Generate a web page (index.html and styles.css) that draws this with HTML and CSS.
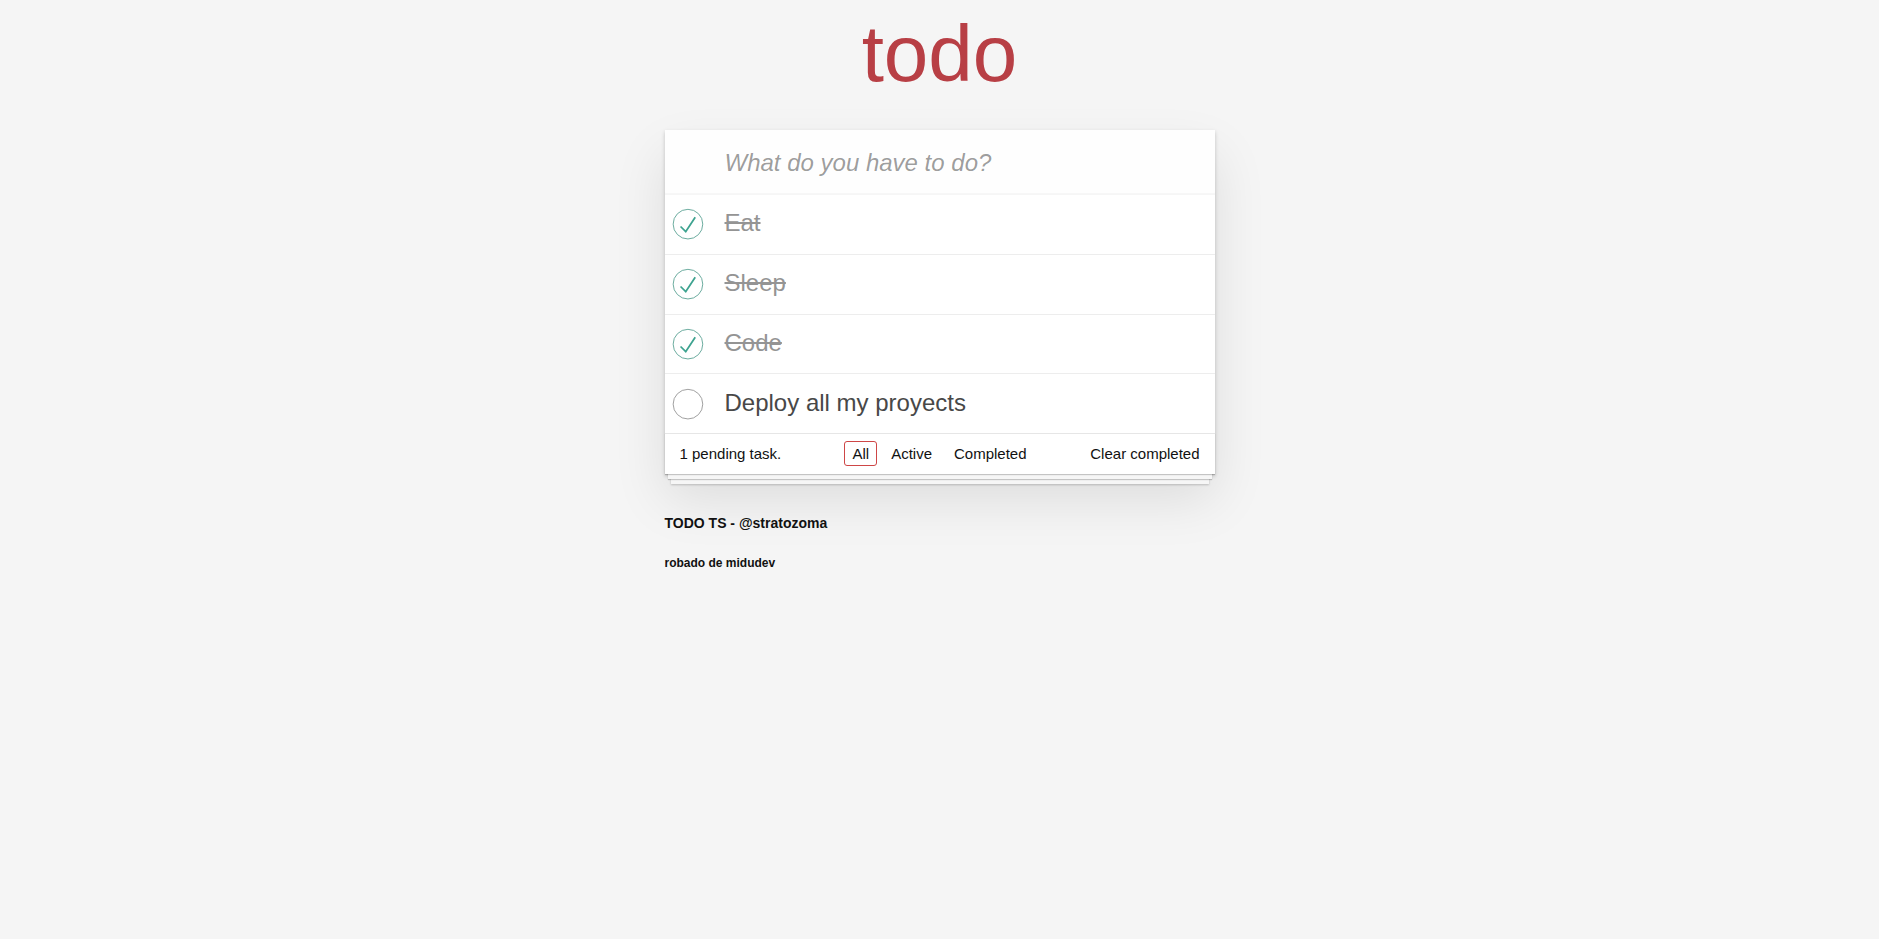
FILE: index.html
```html
<!DOCTYPE html>
<html lang="en">
<head>
<meta charset="utf-8">
<meta name="viewport" content="width=device-width, initial-scale=1">
<title>todo</title>
<link rel="stylesheet" href="styles.css">
</head>
<body>
<svg class="sprite" aria-hidden="true">
  <symbol id="done" viewBox="-10 -18 100 135" overflow="visible">
    <circle cx="50" cy="50" r="50" fill="none" stroke="#59a193" stroke-width="3"/>
    <path fill="#3ea390" d="M72 25L42 71 27 56l-4 4 20 20 34-52z"/>
  </symbol>
  <symbol id="open" viewBox="-10 -18 100 135" overflow="visible">
    <circle cx="50" cy="50" r="50" fill="none" stroke="#949494" stroke-width="3"/>
  </symbol>
</svg>
<div class="page">
  <header>
    <h1 class="title">todo</h1>
  </header>
  <main class="card">
    <form class="new-form">
      <input class="new-todo" type="text" placeholder="What do you have to do?" aria-label="New task">
    </form>
    <ul class="list">
      <li class="item item-done">
        <span class="mark"><input class="toggle" type="checkbox" id="t1" checked><svg class="icon" aria-hidden="true"><use href="#done"/></svg></span>
        <label class="label" for="t1">Eat</label>
      </li>
      <li class="item item-done">
        <span class="mark"><input class="toggle" type="checkbox" id="t2" checked><svg class="icon" aria-hidden="true"><use href="#done"/></svg></span>
        <label class="label" for="t2">Sleep</label>
      </li>
      <li class="item item-done">
        <span class="mark"><input class="toggle" type="checkbox" id="t3" checked><svg class="icon" aria-hidden="true"><use href="#done"/></svg></span>
        <label class="label" for="t3">Code</label>
      </li>
      <li class="item">
        <span class="mark"><input class="toggle" type="checkbox" id="t4"><svg class="icon" aria-hidden="true"><use href="#open"/></svg></span>
        <label class="label" for="t4">Deploy all my proyects</label>
      </li>
    </ul>
    <div class="bar">
      <span>1 pending task.</span>
      <nav class="filters">
        <a class="filter filter-on" href="#all">All</a>
        <a class="filter" href="#active">Active</a>
        <a class="filter" href="#completed">Completed</a>
      </nav>
      <button class="clear" type="button">Clear completed</button>
    </div>
  </main>
  <footer class="credits">
    <h3 class="credit-main">TODO TS - @stratozoma</h3>
    <h5 class="credit-sub">robado de midudev</h5>
  </footer>
</div>
</body>
</html>
```
FILE: styles.css
```css
* {
  box-sizing: border-box;
}

body {
  margin: 0;
  background: #f5f5f5;
  color: #111;
  font-family: "Liberation Sans", Arial, sans-serif;
  font-size: 15px;
  line-height: 17px;
}

.sprite {
  display: none;
}

.page {
  max-width: 550px;
  margin: 0 auto;
}

.title {
  margin: 0 0 26px;
  padding-top: 4px;
  color: #b83f45;
  font-size: 80px;
  font-weight: 400;
  line-height: 100px;
  text-align: center;
}

.card {
  background: #fff;
  box-shadow: 0 2px 4px rgba(0, 0, 0, 0.2), 0 25px 50px rgba(0, 0, 0, 0.1);
}

.new-form {
  display: flex;
}

.new-todo {
  width: 100%;
  height: 65px;
  padding: 16px 16px 16px 60px;
  border: 0;
  outline: 0;
  background: rgba(0, 0, 0, 0.003);
  box-shadow: inset 0 -2px 1px rgba(0, 0, 0, 0.03);
  font: inherit;
  font-size: 24px;
}

.new-todo::placeholder {
  color: rgba(0, 0, 0, 0.4);
  font-style: italic;
}

.list {
  display: grid;
  grid-auto-rows: 1fr;
  min-height: 239px;
  margin: 0 0 -1px;
  padding: 0;
  list-style: none;
}

.item {
  display: grid;
  grid-template-columns: 60px 1fr;
  align-items: center;
  border-bottom: 1px solid #ededed;
  color: #484848;
  font-size: 24px;
  line-height: 28px;
}

.item:last-child {
  border-bottom-color: transparent;
}

.item-done {
  color: #949494;
  text-decoration: line-through;
}

.label {
  padding: 14px 15px 16px 0;
}

.mark {
  display: grid;
  width: 40px;
  height: 40px;
}

.toggle,
.icon {
  grid-area: 1 / 1;
  width: 40px;
  height: 40px;
  margin: 0;
}

.toggle {
  appearance: none;
}

.icon {
  overflow: visible;
  pointer-events: none;
}

.bar {
  display: grid;
  grid-template-columns: 1fr auto 1fr;
  align-items: center;
  height: 41px;
  padding: 0 15px 2px;
  border-top: 1px solid #e6e6e6;
  box-shadow: 0 1px 1px rgba(0, 0, 0, 0.2), 0 8px 0 -3px #f6f6f6,
    0 9px 1px -3px rgba(0, 0, 0, 0.2), 0 16px 0 -6px #f6f6f6,
    0 17px 2px -6px rgba(0, 0, 0, 0.2);
}

.filters {
  display: flex;
  gap: 6px;
}

.filter {
  padding: 3px 7px;
  border: 1px solid transparent;
  border-radius: 3px;
  color: inherit;
  text-decoration: none;
}

.filter-on {
  border-color: #ce4646;
}

.clear {
  justify-self: end;
  padding: 0;
  border: 0;
  background: none;
  color: inherit;
  font: inherit;
  cursor: pointer;
}

.credits {
  padding-top: 41px;
}

.credit-main {
  margin: 0 0 23px;
  font-size: 14px;
}

.credit-sub {
  margin: 0;
  font-size: 12px;
}
```
